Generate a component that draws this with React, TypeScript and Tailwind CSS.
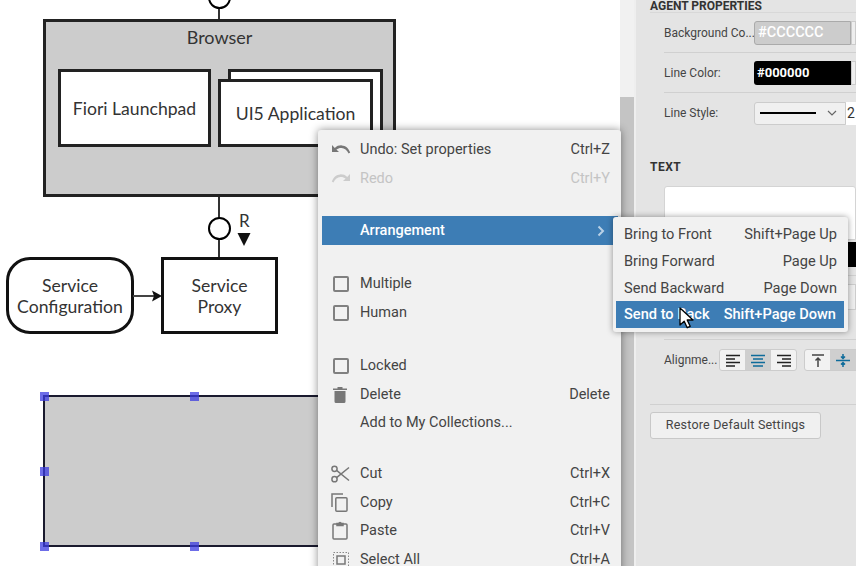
const lato = { fontFamily: "Lato, sans-serif" };

type Item = {
  label: string;
  shortcut?: string;
  icon?: React.ReactNode;
  disabled?: boolean;
  active?: boolean;
  arrow?: boolean;
  gap?: string;
};

const box = (
  <span className="block w-[16px] h-[16px] border-2 border-[#808080] rounded-[2px] ml-[2px]" />
);

const Undo = ({ flip, color }: { flip?: boolean; color: string }) => (
  <svg width="20" height="12" viewBox="0 0 20 12" className={flip ? "-scale-x-100" : ""}>
    <path d="M1 1v7h7L5.400 5.600C7 4.400 8.800 3.800 10.600 4c2.800.2 5.400 2 7 5.600l1.600-1C17.400 3.800 14.400 1.600 10.800 1.400 8.300 1.200 5.800 2 3.800 3.900z" fill={color} />
  </svg>
);

const Trash = () => (
  <svg width="14" height="17" viewBox="0 0 14 17" className="ml-[2px]">
    <path d="M0 2.500h14V4H0zM4.500 1h5v1.500h-5zM1.500 5h11v10.500a1.500 1.500 0 0 1-1.500 1.500H3a1.500 1.500 0 0 1-1.500-1.500z" fill="#777" />
  </svg>
);

const Scissors = () => (
  <svg width="19" height="18" viewBox="0 0 19 18" fill="none" stroke="#777" strokeWidth="1.500">
    <circle cx="3.500" cy="3.800" r="2.600" />
    <circle cx="3.500" cy="14.200" r="2.600" />
    <path d="M5.600 5.400 18 15.500M5.600 12.600 18 2.500" />
  </svg>
);

const Copy = () => (
  <svg width="17" height="19" viewBox="0 0 17 19" fill="none" stroke="#777" strokeWidth="1.500">
    <path d="M1 14V1h11" />
    <rect x="4.800" y="4.800" width="11.200" height="13.400" rx="1" />
  </svg>
);

const Paste = () => (
  <svg width="16" height="19" viewBox="0 0 16 19" fill="none" stroke="#777" strokeWidth="1.500" className="ml-[1px]">
    <rect x="1" y="3" width="14" height="15" rx="1" />
    <path d="M5 4.500V2.500h2a1 1 0 0 1 2 0h2v2z" fill="#777" />
  </svg>
);

const SelectAll = () => (
  <svg width="16" height="16" viewBox="0 0 16 16" fill="none" className="ml-[2px]">
    <rect x="0.500" y="0.500" width="15" height="15" stroke="#888" strokeDasharray="1.500 1.500" />
    <rect x="4" y="4" width="8" height="8" stroke="#777" strokeWidth="1.500" />
  </svg>
);

const mainItems: Item[] = [
  { label: "Undo: Set properties", shortcut: "Ctrl+Z", icon: <Undo color="#777" /> },
  { label: "Redo", shortcut: "Ctrl+Y", icon: <Undo flip color="#ccc" />, disabled: true, gap: "mb-[23px]" },
  { label: "Arrangement", active: true, arrow: true, gap: "mb-[24px]" },
  { label: "Multiple", icon: box },
  { label: "Human", icon: box, gap: "mb-[24px]" },
  { label: "Locked", icon: box },
  { label: "Delete", shortcut: "Delete", icon: <Trash />, gap: "mb-[-1px]" },
  { label: "Add to My Collections...", gap: "mb-[22px]" },
  { label: "Cut", shortcut: "Ctrl+X", icon: <Scissors /> },
  { label: "Copy", shortcut: "Ctrl+C", icon: <Copy />, gap: "mb-[-1px]" },
  { label: "Paste", shortcut: "Ctrl+V", icon: <Paste /> },
  { label: "Select All", shortcut: "Ctrl+A", icon: <SelectAll /> },
];

const subItems = [
  { label: "Bring to Front", shortcut: "Shift+Page Up" },
  { label: "Bring Forward", shortcut: "Page Up" },
  { label: "Send Backward", shortcut: "Page Down" },
  { label: "Send to Back", shortcut: "Shift+Page Down", active: true },
];

const Handle = ({ className }: { className: string }) => (
  <div className={`absolute w-[9px] h-[9px] bg-[#3c3ce0]/75 ${className}`} />
);

const Diagram = () => (
  <div className="relative w-[620px] h-full bg-white text-[#333]" style={lato}>
    {/* connectors */}
    <div className="absolute left-[218px] top-[8px] w-[2px] h-[12px] bg-[#333]" />
    <div className="absolute left-[218px] top-[196px] w-[2px] h-[62px] bg-[#333]" />
    <div className="absolute left-[208px] top-[-14px] w-[23px] h-[23px] rounded-full border-2 border-black bg-white" />
    <div className="absolute left-[208px] top-[217px] w-[23px] h-[23px] rounded-full border-[2.500px] border-black bg-white" />
    <div className="absolute left-[239px] top-[211px] text-[17px] leading-[20px]">R</div>
    <svg className="absolute left-[237px] top-[232px]" width="14" height="14" viewBox="0 0 14 14">
      <path d="M0.500 1h13L7 14z" fill="#111" />
    </svg>

    {/* browser group */}
    <div className="absolute left-[43px] top-[19px] w-[353px] h-[178px] bg-[#cccccc] border-[3px] border-[#222] text-center text-[18px] leading-[24px] pt-[3px]">
      Browser
    </div>
    <div className="absolute left-[58px] top-[69px] w-[153px] h-[78px] bg-white border-[3px] border-[#222] flex items-center justify-center text-[17.600px] pt-[2px]">
      Fiori Launchpad
    </div>
    <div className="absolute left-[228px] top-[69px] w-[155px] h-[70px] bg-white border-[3px] border-[#222]" />
    <div className="absolute left-[218px] top-[79px] w-[155px] h-[68px] bg-white border-[3px] border-[#222] flex items-center justify-center text-[17.600px] pt-[2px]">
      UI5 Application
    </div>

    {/* service boxes */}
    <div className="absolute left-[6px] top-[257px] w-[128px] h-[77px] rounded-[24px] bg-white border-[3px] border-[#111] flex items-center justify-center text-center text-[17.600px] leading-[21px]">
      Service
      <br />
      Configuration
    </div>
    <div className="absolute left-[133px] top-[295px] w-[22px] h-[2px] bg-[#444]" />
    <svg className="absolute left-[152px] top-[290px]" width="10" height="12" viewBox="0 0 10 12">
      <path d="M0 0.500 10 6 0 11.500 2 6z" fill="#111" />
    </svg>
    <div className="absolute left-[161px] top-[257px] w-[117px] h-[77px] bg-white border-[3px] border-[#111] flex items-center justify-center text-center text-[17.600px] leading-[21px]">
      Service
      <br />
      Proxy
    </div>

    {/* selected shape */}
    <div className="absolute left-[43px] top-[395px] w-[302px] h-[152px] bg-[#cccccc] border-2 border-[#1a1a2e]" />
    <Handle className="left-[40px] top-[392px]" />
    <Handle className="left-[190px] top-[392px]" />
    <Handle className="left-[40px] top-[467px]" />
    <Handle className="left-[40px] top-[542px]" />
    <Handle className="left-[190px] top-[542px]" />
  </div>
);

const ContextMenu = () => (
  <div
    className="absolute left-[318px] top-[130px] w-[303px] h-[460px] bg-[#f1f1f1] rounded-[3px] shadow-[0_0_8px_rgba(0,0,0,0.45)] pt-[5px] px-[4px] text-[14.500px] leading-[14px] text-[#444]"
    style={{ fontFamily: "Roboto, sans-serif" }}
  >
    {mainItems.map((item) => (
      <div
        key={item.label}
        className={`flex items-center h-[29px] pr-[7px] ${item.gap ?? ""} ${
          item.active ? "bg-[#3d7db5] text-white font-medium mr-[-1px]" : ""
        } ${item.disabled ? "text-[#c4c4c4]" : ""}`}
      >
        <div className="w-[38px] pl-[9px] shrink-0 flex items-center">{item.icon}</div>
        <span className="flex-1">{item.label}</span>
        {item.shortcut && <span>{item.shortcut}</span>}
        {item.arrow && (
          <svg width="8" height="12" viewBox="0 0 8 12" className="mr-[6px]" fill="none" stroke="#b9d1e6" strokeWidth="2">
            <path d="M1.500 1.500 6 6l-4.500 4.500" />
          </svg>
        )}
      </div>
    ))}
  </div>
);

const SubMenu = () => (
  <div
    className="absolute left-[613px] top-[217px] w-[235px] h-[115px] bg-[#f1f1f1] rounded-[3px] shadow-[0_0_6px_rgba(0,0,0,0.4)] pt-[4px] px-[3px] text-[14.600px] text-[#444]"
    style={{ fontFamily: "Roboto, sans-serif" }}
  >
    {subItems.map((item) => (
      <div
        key={item.label}
        className={`flex items-center justify-between h-[27px] px-[8px] ${
          item.active ? "bg-[#3d7db5] text-white font-medium mt-[-1px] mr-[1px]" : ""
        }`}
      >
        <span>{item.label}</span>
        <span>{item.shortcut}</span>
      </div>
    ))}
  </div>
);

const Cursor = () => (
  <svg className="absolute left-[679px] top-[307px]" width="15" height="22" viewBox="0 0 15 22">
    <path d="M1 1v17l4.200-3.800 3 6.500 3-1.400-3-6.300H14z" fill="#fff" stroke="#000" strokeWidth="1.300" strokeLinejoin="round" />
  </svg>
);

const AlignIcon = ({ lines, color }: { lines: string; color: string }) => (
  <svg width="16" height="13" viewBox="0 0 16 13">
    <path d={lines} stroke={color} strokeWidth="1.500" fill="none" />
  </svg>
);

const PropRow = ({ label, children, line = true }: { label: string; children: React.ReactNode; line?: boolean }) => (
  <div className={`ml-[28px] flex items-center h-[40px] ${line ? "border-b border-[#d0d0d0]" : ""}`}>
    <span className="w-[90px] shrink-0 text-[12px] whitespace-nowrap text-[#444]">{label}</span>
    {children}
  </div>
);

const Panel = () => (
  <div
    className="flex-1 h-full bg-[#e4e4e4] border-l-2 border-[#eeeeee] overflow-hidden text-[#333]"
    style={{ fontFamily: "Roboto, sans-serif" }}
  >
    <div className="ml-[14px] h-[13px] border-b border-[#d8d8d8] text-[12px] leading-[12px] font-bold text-[#333]">AGENT PROPERTIES</div>
    <PropRow label="Background Co...">
      <div className="w-[97px] h-[24px] bg-[#cccccc] border border-[#aaa] rounded-l-[3px] pl-[3px] text-[14.500px] leading-[22px] font-medium text-white">#CCCCCC</div>
      <div className="flex-1 h-[24px] bg-[#eeeeee] border border-[#ccc]" />
    </PropRow>
    <PropRow label="Line Color:">
      <div className="w-[97px] h-[24px] bg-black rounded-l-[3px] pl-[3px] text-[13px] leading-[24px] font-bold text-white">#000000</div>
      <div className="flex-1 h-[24px] bg-[#eeeeee] border border-[#ccc]" />
    </PropRow>
    <PropRow label="Line Style:" line={false}>
      <div className="w-[92px] h-[23px] bg-[#f0f0f0] border border-[#ccc] rounded-l-[3px] flex items-center pl-[5px] gap-[11px]">
        <div className="w-[56px] h-[2px] bg-black" />
        <svg width="10" height="6" viewBox="0 0 10 6" fill="none" stroke="#666" strokeWidth="1.200">
          <path d="M1 1l4 4 4-4" />
        </svg>
      </div>
      <div className="flex-1 h-[23px] bg-white text-[14px] leading-[23px] pl-[1px]">2</div>
    </PropRow>
    <div className="ml-[14px] mt-[26px] text-[12px] tracking-[0.5px] leading-[16px] font-bold text-[#333]">TEXT</div>
    <div className="ml-[28px] mt-[11px] h-[54px] bg-white border border-[#d4d4d4] rounded-t-[3px]" />
    {/* these two rows sit mostly under the submenu */}
    <div className="ml-[28px] mt-[2px] h-[25px] flex justify-end">
      <div className="w-[100px] bg-black" />
    </div>
    <div className="ml-[28px] mt-[8px] border-t border-[#d0d0d0] pt-[8px]">
      <div className="h-[26px] bg-[#eeeeee] border border-[#ccc]" />
      <div className="h-[22px]" />
    </div>
    <div className="ml-[28px] mt-[7px] border-t border-[#d0d0d0] pt-[9px] flex items-center">
      <span className="w-[55px] shrink-0 text-[12px] text-[#444]">Alignme...</span>
      <div className="flex h-[22px] border border-[#ccc] rounded-[3px] bg-[#f2f2f2]">
        <div className="w-[25px] flex items-center justify-center">
          <AlignIcon lines="M1 1.500h14M1 5h9M1 8.500h14M1 12h9" color="#222" />
        </div>
        <div className="w-[26px] bg-[#cfcfcf] flex items-center justify-center">
          <AlignIcon lines="M1 1.500h14M3 5h10M1 8.500h14M3 12h10" color="#0e6b9a" />
        </div>
        <div className="w-[25px] flex items-center justify-center">
          <AlignIcon lines="M1 1.500h14M6 5h9M1 8.500h14M6 12h9" color="#222" />
        </div>
      </div>
      <div className="flex h-[22px] border border-[#ccc] rounded-l-[3px] bg-[#f2f2f2] ml-[7px] flex-1">
        <div className="w-[25px] flex items-center justify-center">
          <AlignIcon lines="M2 1h12M8 13V4M5.500 6.500 8 4l2.500 2.500" color="#444" />
        </div>
        <div className="w-[26px] bg-[#cfcfcf] flex items-center justify-center">
          <AlignIcon lines="M1 6.500h14M8 0v4.500M6 2.500l2 2 2-2M8 13V8.500M6 10.500l2-2 2 2" color="#0e6b9a" />
        </div>
      </div>
    </div>
    <div className="ml-[14px] mt-[33px] border-t border-[#d0d0d0] pt-[7px]">
      <button className="w-[171px] h-[27px] bg-[#f0f0f0] border border-[#c8c8c8] rounded-[3px] text-[12.500px] tracking-[0.2px] text-[#444]">
        Restore Default Settings
      </button>
    </div>
  </div>
);

export default function App() {
  return (
    <div className="relative flex w-[856px] h-[566px] overflow-hidden bg-white">
      <Diagram />
      <div className="w-[14px] h-full bg-[#f1f1f1] flex flex-col">
        <div className="mt-[97px] flex-1 bg-[#c4c4c4]" />
      </div>
      <Panel />
      <ContextMenu />
      <SubMenu />
      <Cursor />
    </div>
  );
}
